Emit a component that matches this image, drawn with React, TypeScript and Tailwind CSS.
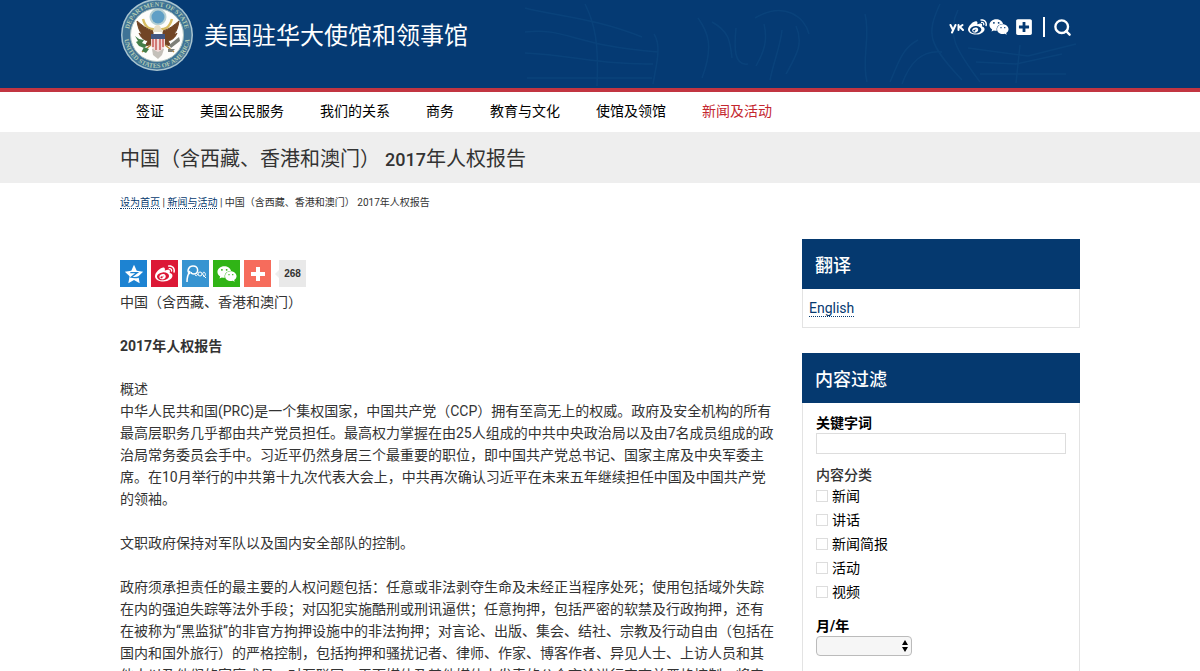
import { useId } from "react"
import type { ReactNode } from "react"
import { Search } from "lucide-react"
import { FaPlusSquare, FaWeibo, FaWeixin } from "react-icons/fa"

const navItems = ["签证", "美国公民服务", "我们的关系", "商务", "教育与文化", "使馆及领馆", "新闻及活动"]

const categories = ["新闻", "讲话", "新闻简报", "活动", "视频"]

function Seal() {
  const id = useId()
  return (
    <svg viewBox="0 0 74 74" className="h-[74px] w-[74px] shrink-0" role="img" aria-label="美国国务院徽章">
      <defs>
        <path id={id + "t"} d="M8.500 37a28.500 28.500 0 0 1 57 0" />
        <path id={id + "b"} d="M4 37a33 33 0 0 0 66 0" />
      </defs>
      <circle cx="37" cy="37" r="36" fill="#a9c4cf" />
      <circle cx="37" cy="37" r="34.500" fill="#3f7396" />
      <circle cx="37" cy="37" r="26.500" fill="#fdfdfb" stroke="#a9bfbd" />
      <g fill="#b5cdb4" fontFamily="Liberation Serif, serif" fontSize="6.500" fontWeight="bold" textAnchor="middle">
        <text><textPath href={"#" + id + "t"} startOffset="50%">DEPARTMENT OF STATE</textPath></text>
        <text><textPath href={"#" + id + "b"} startOffset="50%">UNITED STATES OF AMERICA</textPath></text>
      </g>
      <path d="M23 21c3 11 9 11 15 10 6 1 11 0 14-10" fill="none" stroke="#d8bd62" strokeWidth="2.500" />
      <circle cx="38" cy="19" r="8.500" fill="#b5cfd2" />
      <circle cx="38" cy="19" r="6.500" fill="#609fc6" />
      <path d="M33 33C26 31 22 27 17 23c1 6 2 10 5 13-1 0-2 0-3-1 2 5 5 7 9 8l-3 5 8-2zM43 33c7-2 11-6 16-10-1 6-2 10-5 13 1 0 2 0 3-1-2 5-5 7-9 8l3 5-8-2z" fill="#714525" stroke="#714525" strokeWidth="1" />
      <path d="M34 30c1-4 6-4 7 0l2 4H33z" fill="#e8dfc8" />
      <path d="M31 47l-9 7M45 47l9 7" stroke="#b98a3a" strokeWidth="1.500" />
      <path d="M15 38l4 3 5 1-2 3 5 2-3 3-5-2-3-4 2-1zM24 49l5 2-3 4-4-2z" fill="#437e48" />
      <path d="M49 47l10-8 1 4-9 7zM48 51l7 0-3 3-4 0z" fill="#7d8078" />
      <path d="M32 51l6-3 6 3-2 6-4 4-5-4z" fill="#c4c0b9" />
      <path d="M31 37h14v9c0 4-3 6-7 8-4-2-7-4-7-8z" fill="#f0d9d7" />
      <path d="M33 41v8M36 41v11M40 41v11M43 41v8" stroke="#c75b58" strokeWidth="1.500" />
      <path d="M31 36h14v5H31z" fill="#415681" />
    </svg>
  )
}

// 页眉背景中的淡色鹰徽纹样
function HeaderPattern() {
  return (
    <svg viewBox="0 0 560 88" className="absolute top-0 right-[120px] h-[88px] w-[560px]" fill="none" stroke="#0d4880" strokeWidth="1.500" opacity="0.600" aria-hidden="true">
      <path d="M5 8c30 8 70 10 117 29M5 32c40-5 50 14 133 20M5 53c47 2 77 12 128 11M7 78h125M65 4c10 20 14 40 12 82M134 34c8 12 2 32-1 50" />
      <path d="M178 18c10 14 16 28 4 60M192 22c18 10 18 20 20 36M216 28c-2 20-2 38 12 36M244 24c4 16 0 28-8 42M262 30c-2 18-8 30-12 50M276 26c8 18 0 30-10 48M235 18c30-18 50 0 54 16" />
      <path d="M345 14c6 24-4 44 2 68M370 82c8-18 12-34 28-42M382 84c8-22 20-34 40-32M420 4c-14 30-12 40 22 76M438 10c-12 24-2 40 22 72" />
      <path d="M448 48l60 8 48-12M456 62l40 2 46-10M460 74h86M500 45l-4 38" />
    </svg>
  )
}

function YoukuIcon() {
  return (
    <svg viewBox="0 0 16 14" className="h-3.5 w-4" fill="none" stroke="currentColor" strokeWidth="2" strokeLinecap="round" strokeLinejoin="round">
      <path d="M2.500 5 4.500 9M7.500 5 4 12.500M10.500 5v5M14.500 5 11 7.500M12 7 15 10" />
    </svg>
  )
}

function ShareBar() {
  const button = "flex h-[27px] w-[27px] items-center justify-center text-white"
  return (
    <div className="flex gap-1">
      <button aria-label="QQ空间" className={button + " bg-[#1d83d2]"}>
        <svg viewBox="0 0 24 24" className="h-[22px] w-[22px]">
          <path d="m12 2 3 6.500 7 1-5.200 5 1.400 7.500-6.200-3.500L5.800 22l1.400-7.500L2 9.500l7-1z" fill="currentColor" />
          <path d="M8 10.500h7.500L9 15.500c3 .8 6 .5 9-.5" fill="none" stroke="#1d83d2" strokeWidth="1.500" />
        </svg>
      </button>
      <button aria-label="新浪微博" className={button + " bg-[#dc1836]"}><FaWeibo size={20} /></button>
      <button aria-label="腾讯微博" className={button + " bg-[#3794d1]"}>
        <svg viewBox="0 0 27 27" className="h-[27px] w-[27px]" fill="none" stroke="currentColor">
          <path d="M8 14c-4-3-1-8 3-8 6 0 6 8 1 8-2 0-3-1-3-2M8 11c-2 3-3 7-3 11" strokeWidth="1.500" />
          <circle cx="18" cy="14" r="2" />
          <path d="M16 14c-1 2-2 2-3 1M21 16c2 1 3-1 2-3s-3 0-2 2l3 3" />
        </svg>
      </button>
      <button aria-label="微信" className={button + " bg-[#30b416]"}><FaWeixin size={20} /></button>
      <button aria-label="更多分享" className={button + " bg-[#f66c5c]"}>
        <svg viewBox="0 0 14 14" className="h-3.5 w-3.5" stroke="currentColor" strokeWidth="4"><path d="M7 0v14M0 7h14" /></svg>
      </button>
      <div className="relative ml-1 flex h-[27px] w-[27px] items-center justify-center bg-[#e9e9e9] font-['Liberation_Sans',sans-serif] text-[10px] font-bold text-[#333]">
        <span className="absolute top-2.5 -left-1 border-y-4 border-r-4 border-y-transparent border-r-[#eee]" />
        268
      </div>
    </div>
  )
}

function Panel({ title, children }: { title: string; children: ReactNode }) {
  return (
    <section className="border border-t-0 border-[#e3e3e3]">
      <h2 className="-mx-px bg-[#05396f] px-[13px] pt-[13px] pb-[9px] text-[18px] leading-7 font-medium text-white">{title}</h2>
      {children}
    </section>
  )
}

export default function App() {
  return (
    <div className="min-h-screen bg-white font-[Roboto,'Noto_Sans_CJK_SC',sans-serif] text-sm text-[#333]" lang="zh-CN">
      <header className="relative h-[92px] overflow-hidden border-b-4 border-[#c23541] bg-[#053a73] text-white">
        <HeaderPattern />
        <div className="relative mx-auto flex max-w-[960px] items-start justify-between">
          <a href="#" className="-mt-0.5 flex items-center gap-2.5">
            <Seal />
            <span className="pt-0.5 text-2xl">美国驻华大使馆和领事馆</span>
          </a>
          <div className="mr-2 flex items-center pt-[17px]">
            <a href="#" aria-label="优酷"><YoukuIcon /></a>
            <a href="#" aria-label="微博" className="ml-1"><FaWeibo size={19} /></a>
            <a href="#" aria-label="微信" className="ml-0.5"><FaWeixin size={20} /></a>
            <a href="#" aria-label="更多" className="ml-1.5"><FaPlusSquare size={18} /></a>
            <span className="mr-2 ml-2.5 h-5 w-0.5 bg-white" />
            <button aria-label="搜索"><Search size={19} strokeWidth={3} /></button>
          </div>
        </div>
      </header>

      <nav className="mx-auto flex h-10 max-w-[960px] items-center gap-9 px-4 pb-0.5 text-black">
        {navItems.map((item, i) => (
          <a key={item} href="#" className={i === 6 ? "text-[#c4272f]" : ""}>{item}</a>
        ))}
      </nav>

      <div className="bg-[#eee]">
        <h1 className="mx-auto max-w-[960px] pt-[13px] pb-[9px] text-xl">
          中国（含西藏、香港和澳门） <span className="text-lg font-medium">2017</span>年人权报告
        </h1>
      </div>

      <div className="mx-auto max-w-[960px]">
        <div className="pt-[13px] text-[10px] leading-[14px]">
          <a href="#" className="border-b border-dotted border-[#05396f] text-[#05396f]">设为首页</a>
          {" | "}
          <a href="#" className="border-b border-dotted border-[#05396f] text-[#05396f]">新闻与活动</a>
          {" | "}中国（含西藏、香港和澳门） 2017年人权报告
        </div>

        <div className="flex justify-between pt-[29px]">
          <main className="w-[656px] pt-[21px] leading-[22px]">
            <ShareBar />
            <p className="mt-1">中国（含西藏、香港和澳门）</p>
            <p className="mt-[22px] font-bold">2017年人权报告</p>
            <p className="mt-[21px]">概述</p>
            <p>
              中华人民共和国(PRC)是一个集权国家，中国共产党（CCP）拥有至高无上的权威。政府及安全机构的所有最高层职务几乎都由共产党员担任。最高权力掌握在由25人组成的中共中央政治局以及由7名成员组成的政治局常务委员会手中。习近平仍然身居三个最重要的职位，即中国共产党总书记、国家主席及中央军委主席。在10月举行的中共第十九次代表大会上，中共再次确认习近平在未来五年继续担任中国及中国共产党的领袖。
            </p>
            <p className="mt-[22px]">文职政府保持对军队以及国内安全部队的控制。</p>
            <p className="mt-[22px]">
              政府须承担责任的最主要的人权问题包括：任意或非法剥夺生命及未经正当程序处死；使用包括域外失踪在内的强迫失踪等法外手段；对囚犯实施酷刑或刑讯逼供；任意拘押，包括严密的软禁及行政拘押，还有在被称为“黑监狱”的非官方拘押设施中的非法拘押；对言论、出版、集会、结社、宗教及行动自由（包括在国内和国外旅行）的严格控制，包括拘押和骚扰记者、律师、作家、博客作者、异见人士、上访人员和其他人以及他们的家庭成员；对互联网、平面媒体及其他媒体上发表的公众言论进行审查并严格控制；将来
            </p>
          </main>

          <aside className="flex w-[278px] flex-col gap-[25px]">
            <Panel title="翻译">
              <div className="px-1.5 pt-[9px] pb-[9px] leading-5">
                <a href="#" className="border-b border-dotted border-[#05396f] text-[#05396f]">English</a>
              </div>
            </Panel>
            <Panel title="内容过滤">
              <form className="px-[13px] pt-2.5 pb-8 text-black">
                <label htmlFor="keyword" className="block leading-5 font-bold">关键字词</label>
                <input id="keyword" type="text" className="block h-[21px] w-full border border-[#ddd] px-1" />
                <fieldset className="mt-[11px]">
                  <legend className="leading-5 font-medium text-[#333]">内容分类</legend>
                  <div className="flex flex-col gap-1 pt-px">
                    {categories.map((name) => (
                      <label key={name} className="flex items-center gap-1">
                        <input type="checkbox" className="h-3 w-3 appearance-none border border-[#ddd]" />
                        {name}
                      </label>
                    ))}
                  </div>
                </fieldset>
                <label htmlFor="month" className="mt-3.5 block leading-5 font-bold">月/年</label>
                <div className="relative w-24">
                  <select id="month" className="block h-5 w-full appearance-none rounded border border-[#bbb] bg-[#f6f6f6]">
                    <option></option>
                  </select>
                  <svg viewBox="0 0 6 12" className="pointer-events-none absolute top-1 right-1 h-3 w-1.5"><path d="M3 0l3 5H0zM3 12l3-5H0z" /></svg>
                </div>
              </form>
            </Panel>
          </aside>
        </div>
      </div>
    </div>
  )
}
